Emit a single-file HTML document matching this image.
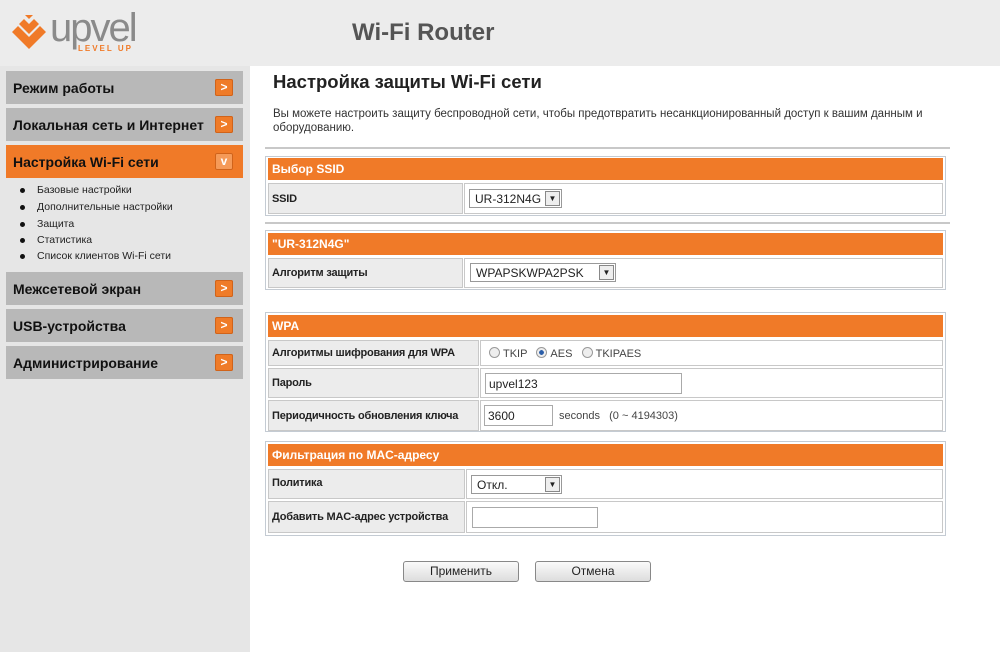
<!DOCTYPE html>
<html><head><meta charset="utf-8"><style>
*{margin:0;padding:0;box-sizing:border-box}
body{width:1000px;height:652px;position:relative;background:#fff;font-family:"Liberation Sans",Arial,sans-serif;overflow:hidden;color:#222}
.a{position:absolute}
.menu{position:absolute;left:6px;width:237px;height:33px;background:#b8b8b8;font-weight:bold;font-size:14px;color:#111;padding:9px 0 0 7px;white-space:nowrap}
.menu.on{background:#f07a28}
.arr{position:absolute;right:10px;top:8px;width:18px;height:17px;background:#ef7b28;border-radius:2px;color:#fff;font-size:12px;text-align:center;line-height:17px;box-shadow:inset 0 0 0 1px #d0631a}
.on .arr{background:#f59a58}
.sub{position:absolute;left:22px;font-size:10.5px;color:#222}
.sub:before{content:"";position:absolute;left:-2px;top:4px;width:5px;height:5px;border-radius:50%;background:#111}
.sub span{margin-left:15px}
.box{position:absolute;left:265px;width:681px;border:1px solid #c4cbd3}
.hd{position:absolute;left:2px;right:2px;height:22px;background:#f07a28;color:#fff;font-weight:bold;font-size:12px;padding:4px 0 0 4px}
.lb{position:absolute;left:2px;background:#ececec;border:1px solid #c8c8c8;font-size:11px;font-weight:bold;color:#222;padding-left:3px;white-space:nowrap;letter-spacing:-0.2px}
.vl{position:absolute;right:2px;border:1px solid #c8c8c8;background:#fff;font-size:11px}
.sel{position:absolute;border:1px solid #999;background:#fff;height:19px;font-size:12px;padding:2px 0 0 5px}
.sel i{position:absolute;right:1px;top:1px;width:15px;height:15px;border:1px solid #888;background:#eee;font-style:normal;font-size:8px;text-align:center;line-height:14px}
.inp{position:absolute;border:1px solid #aaa;background:#fff;height:21px;font-size:12px;padding:3px 0 0 3px}
.btn{position:absolute;top:561px;width:116px;height:21px;border:1px solid #888;border-radius:3px;background:linear-gradient(#fafafa,#ddd);font-size:12px;text-align:center;line-height:19px}
.rad{display:inline-block;width:11px;height:11px;border:1px solid #999;border-radius:50%;background:#eee;vertical-align:-1px;margin-right:3px;position:relative}
</style></head><body>
<div class="a" style="left:0;top:0;width:1000px;height:66px;background:#ececec"></div>
<div class="a" style="left:0;top:66px;width:250px;height:586px;background:#e6e6e6"></div>
<svg class="a" style="left:10px;top:14px" width="40" height="38" viewBox="0 0 40 38"><path d="M2 18 L19 35 L36 18 L30 12 L19 23 L8 12Z" fill="#f07a28"/><path d="M9 10 L19 20 L29 10 L24 5 L19 10 L14 5Z" fill="#f07a28"/><path d="M15 1 L19 5 L23 1Z" fill="#f07a28"/></svg>
<div class="a" style="left:50px;top:6px;font-size:40px;color:#8a8a8a;letter-spacing:-2px">upvel</div>
<div class="a" style="left:78px;top:44px;font-size:8px;color:#f07a28;font-weight:bold;letter-spacing:2px">LEVEL UP</div>
<div class="a" style="left:352px;top:19px;font-size:24px;font-weight:bold;color:#555">Wi-Fi Router</div>

<div class="menu" style="top:71px">Режим работы<div class="arr">&gt;</div></div>
<div class="menu" style="top:108px">Локальная сеть и Интернет<div class="arr">&gt;</div></div>
<div class="menu on" style="top:145px">Настройка Wi-Fi сети<div class="arr">v</div></div>
<div class="sub" style="top:184px"><span>Базовые настройки</span></div>
<div class="sub" style="top:201px"><span>Дополнительные настройки</span></div>
<div class="sub" style="top:218px"><span>Защита</span></div>
<div class="sub" style="top:234px"><span>Статистика</span></div>
<div class="sub" style="top:250px"><span>Список клиентов Wi-Fi сети</span></div>
<div class="menu" style="top:272px">Межсетевой экран<div class="arr">&gt;</div></div>
<div class="menu" style="top:309px">USB-устройства<div class="arr">&gt;</div></div>
<div class="menu" style="top:346px">Администрирование<div class="arr">&gt;</div></div>

<div class="a" style="left:273px;top:71px;font-size:18.5px;font-weight:bold;color:#222">Настройка защиты Wi-Fi сети</div>
<div class="a" style="left:273px;top:107px;width:680px;font-size:11.5px;line-height:14px;color:#333">Вы можете настроить защиту беспроводной сети, чтобы предотвратить несанкционированный доступ к вашим данным и оборудованию.</div>
<div class="a" style="left:265px;top:147px;width:685px;height:2px;background:#c8c8c8"></div>

<div class="box" style="top:156px;height:60px">
<div class="hd" style="top:1px">Выбор SSID</div>
<div class="lb" style="top:26px;width:195px;height:31px;padding-top:9px">SSID</div>
<div class="vl" style="top:26px;left:198px;height:31px"><div class="sel" style="left:4px;top:5px;width:93px">UR-312N4G<i>▼</i></div></div>
</div>
<div class="a" style="left:265px;top:222px;width:685px;height:2px;background:#c8c8c8"></div>

<div class="box" style="top:230px;height:60px">
<div class="hd" style="top:2px">"UR-312N4G"</div>
<div class="lb" style="top:27px;width:195px;height:30px;padding-top:8px">Алгоритм защиты</div>
<div class="vl" style="top:27px;left:198px;height:30px"><div class="sel" style="left:5px;top:4px;width:146px">WPAPSKWPA2PSK<i>▼</i></div></div>
</div>

<div class="box" style="top:312px;height:120px">
<div class="hd" style="top:2px">WPA</div>
<div class="lb" style="top:27px;width:211px;height:26px;padding-top:6px">Алгоритмы шифрования для WPA</div>
<div class="vl" style="top:27px;left:214px;height:26px;padding:6px 0 0 8px;color:#444"><span class="rad"></span>TKIP &nbsp; <span class="rad" style="background:radial-gradient(#2a5da8 35%,#eee 40%)"></span>AES &nbsp; <span class="rad"></span>TKIPAES</div>
<div class="lb" style="top:55px;width:211px;height:30px;padding-top:8px">Пароль</div>
<div class="vl" style="top:55px;left:214px;height:30px"><div class="inp" style="left:4px;top:4px;width:197px">upvel123</div></div>
<div class="lb" style="top:87px;width:211px;height:31px;padding-top:9px">Периодичность обновления ключа</div>
<div class="vl" style="top:87px;left:214px;height:31px"><div class="inp" style="left:3px;top:4px;width:69px">3600</div><div class="a" style="left:78px;top:9px;color:#444">seconds &nbsp; (0 ~ 4194303)</div></div>
</div>

<div class="box" style="top:441px;height:95px">
<div class="hd" style="top:2px">Фильтрация по MAC-адресу</div>
<div class="lb" style="top:27px;width:197px;height:30px;padding-top:7px">Политика</div>
<div class="vl" style="top:27px;left:200px;height:30px"><div class="sel" style="left:4px;top:5px;width:91px">Откл.<i>▼</i></div></div>
<div class="lb" style="top:59px;width:197px;height:32px;padding-top:9px">Добавить MAC-адрес устройства</div>
<div class="vl" style="top:59px;left:200px;height:32px"><div class="inp" style="left:5px;top:5px;width:126px"></div></div>
</div>

<div class="btn" style="left:403px">Применить</div>
<div class="btn" style="left:535px">Отмена</div>
</body></html>
